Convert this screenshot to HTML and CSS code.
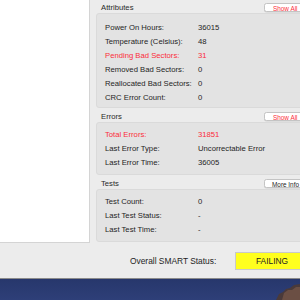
FILE: index.html
```html
<!DOCTYPE html>
<html>
<head>
<meta charset="utf-8">
<link rel="stylesheet" href="styles.css">
</head>
<body>
<div class="window">
  <div class="main">
    <div class="sidebar"></div>
    <div class="content">
      <div class="section first">
        <div class="header"><span class="title">Attributes</span><span class="btn red">Show All</span></div>
        <div class="box attrs">
          <div class="row"><span class="label">Power On Hours:</span><span class="value">36015</span></div>
          <div class="row"><span class="label">Temperature (Celsius):</span><span class="value">48</span></div>
          <div class="row red"><span class="label">Pending Bad Sectors:</span><span class="value">31</span></div>
          <div class="row"><span class="label">Removed Bad Sectors:</span><span class="value">0</span></div>
          <div class="row"><span class="label">Reallocated Bad Sectors:</span><span class="value">0</span></div>
          <div class="row"><span class="label">CRC Error Count:</span><span class="value">0</span></div>
        </div>
      </div>
      <div class="section">
        <div class="header"><span class="title">Errors</span><span class="btn red">Show All</span></div>
        <div class="box">
          <div class="row red"><span class="label">Total Errors:</span><span class="value">31851</span></div>
          <div class="row"><span class="label">Last Error Type:</span><span class="value">Uncorrectable Error</span></div>
          <div class="row"><span class="label">Last Error Time:</span><span class="value">36005</span></div>
        </div>
      </div>
      <div class="section">
        <div class="header"><span class="title">Tests</span><span class="btn more">More Info</span></div>
        <div class="box">
          <div class="row"><span class="label">Test Count:</span><span class="value">0</span></div>
          <div class="row"><span class="label">Last Test Status:</span><span class="value">-</span></div>
          <div class="row"><span class="label">Last Test Time:</span><span class="value">-</span></div>
        </div>
      </div>
    </div>
  </div>
  <div class="status">
    <span class="status-label">Overall SMART Status:</span>
    <span class="failing">FAILING</span>
  </div>
</div>
<div class="desktop">
  <svg class="rock" width="30" height="21" viewBox="0 0 30 21"><path d="M6 21 L9 15 L13 13 L16 10 L20 9 L24 6 L30 5 L30 21 Z" fill="#4a3a3a"/><path d="M14 14 L18 11 L22 11 L26 8 L30 8 L30 21 L12 21 Z" fill="#6b4f44"/></svg>
</div>
</body>
</html>
```

FILE: styles.css
```css
html, body {
  margin: 0;
  padding: 0;
}
body {
  width: 300px;
  height: 300px;
  overflow: hidden;
  background: #ececec;
  font-family: "Liberation Sans", Arial, sans-serif;
  font-size: 7.7px;
  color: #1e1e1e;
}
.window {
  height: 279px;
  background: #ececec;
  border-bottom: 1px solid #8a8a8a;
  box-sizing: border-box;
  display: flex;
  flex-direction: column;
}
.main {
  display: flex;
  height: 243px;
}
.sidebar {
  width: 89px;
  height: 242px;
  background: #fff;
  border-right: 1px solid #d4d4d4;
  border-bottom: 1px solid #d4d4d4;
  flex: none;
}
.content {
  margin-left: 6px;
  width: 216px;
  flex: none;
  display: flex;
  flex-direction: column;
}
.header {
  height: 14px;
  display: flex;
  align-items: flex-end;
}
.first .header {
  height: 13px;
}
.title {
  line-height: 10px;
  padding-left: 5px;
  flex: 1;
  color: #2a2a2a;
}
.btn {
  width: 48px;
  flex: none;
  height: 9px;
  line-height: 9px;
  margin-bottom: 1px;
  padding-left: 8px;
  box-sizing: border-box;
  background: #fff;
  border: 0.5px solid #c4c4c4;
  border-radius: 2.5px;
  font-size: 6.4px;
  color: #222;
  box-shadow: 0 0.5px 0.5px rgba(0,0,0,0.12);
  white-space: nowrap;
}
.btn.more {
  padding-left: 7px;
}
.btn.red {
  color: #fb2d3a;
}
.box {
  background: #e3e3e3;
  border: 1px solid #dadada;
  border-radius: 3px;
  padding: 5px 0 4px 8px;
}
.box.attrs {
  padding-top: 7px;
  padding-bottom: 2px;
}
.row {
  display: flex;
  height: 14px;
  line-height: 14px;
}
.label {
  width: 93px;
  flex: none;
}
.row.red {
  color: #fb2d3a;
}
.status {
  height: 36px;
  display: flex;
  align-items: center;
  padding-left: 130px;
  font-size: 8.4px;
}
.status-label {
  width: 105px;
  flex: none;
  padding-top: 1px;
}
.failing {
  width: 72px;
  height: 16px;
  line-height: 16px;
  margin-top: 1px;
  flex: none;
  text-align: center;
  background: #ffff1e;
  border: 1px solid #c9c9c9;
  font-size: 8.4px;
  color: #222;
}
.desktop {
  height: 21px;
  background: linear-gradient(#27376c, #2e3f78);
  position: relative;
  overflow: hidden;
}
.rock {
  position: absolute;
  right: 0;
  bottom: 0;
}
```
